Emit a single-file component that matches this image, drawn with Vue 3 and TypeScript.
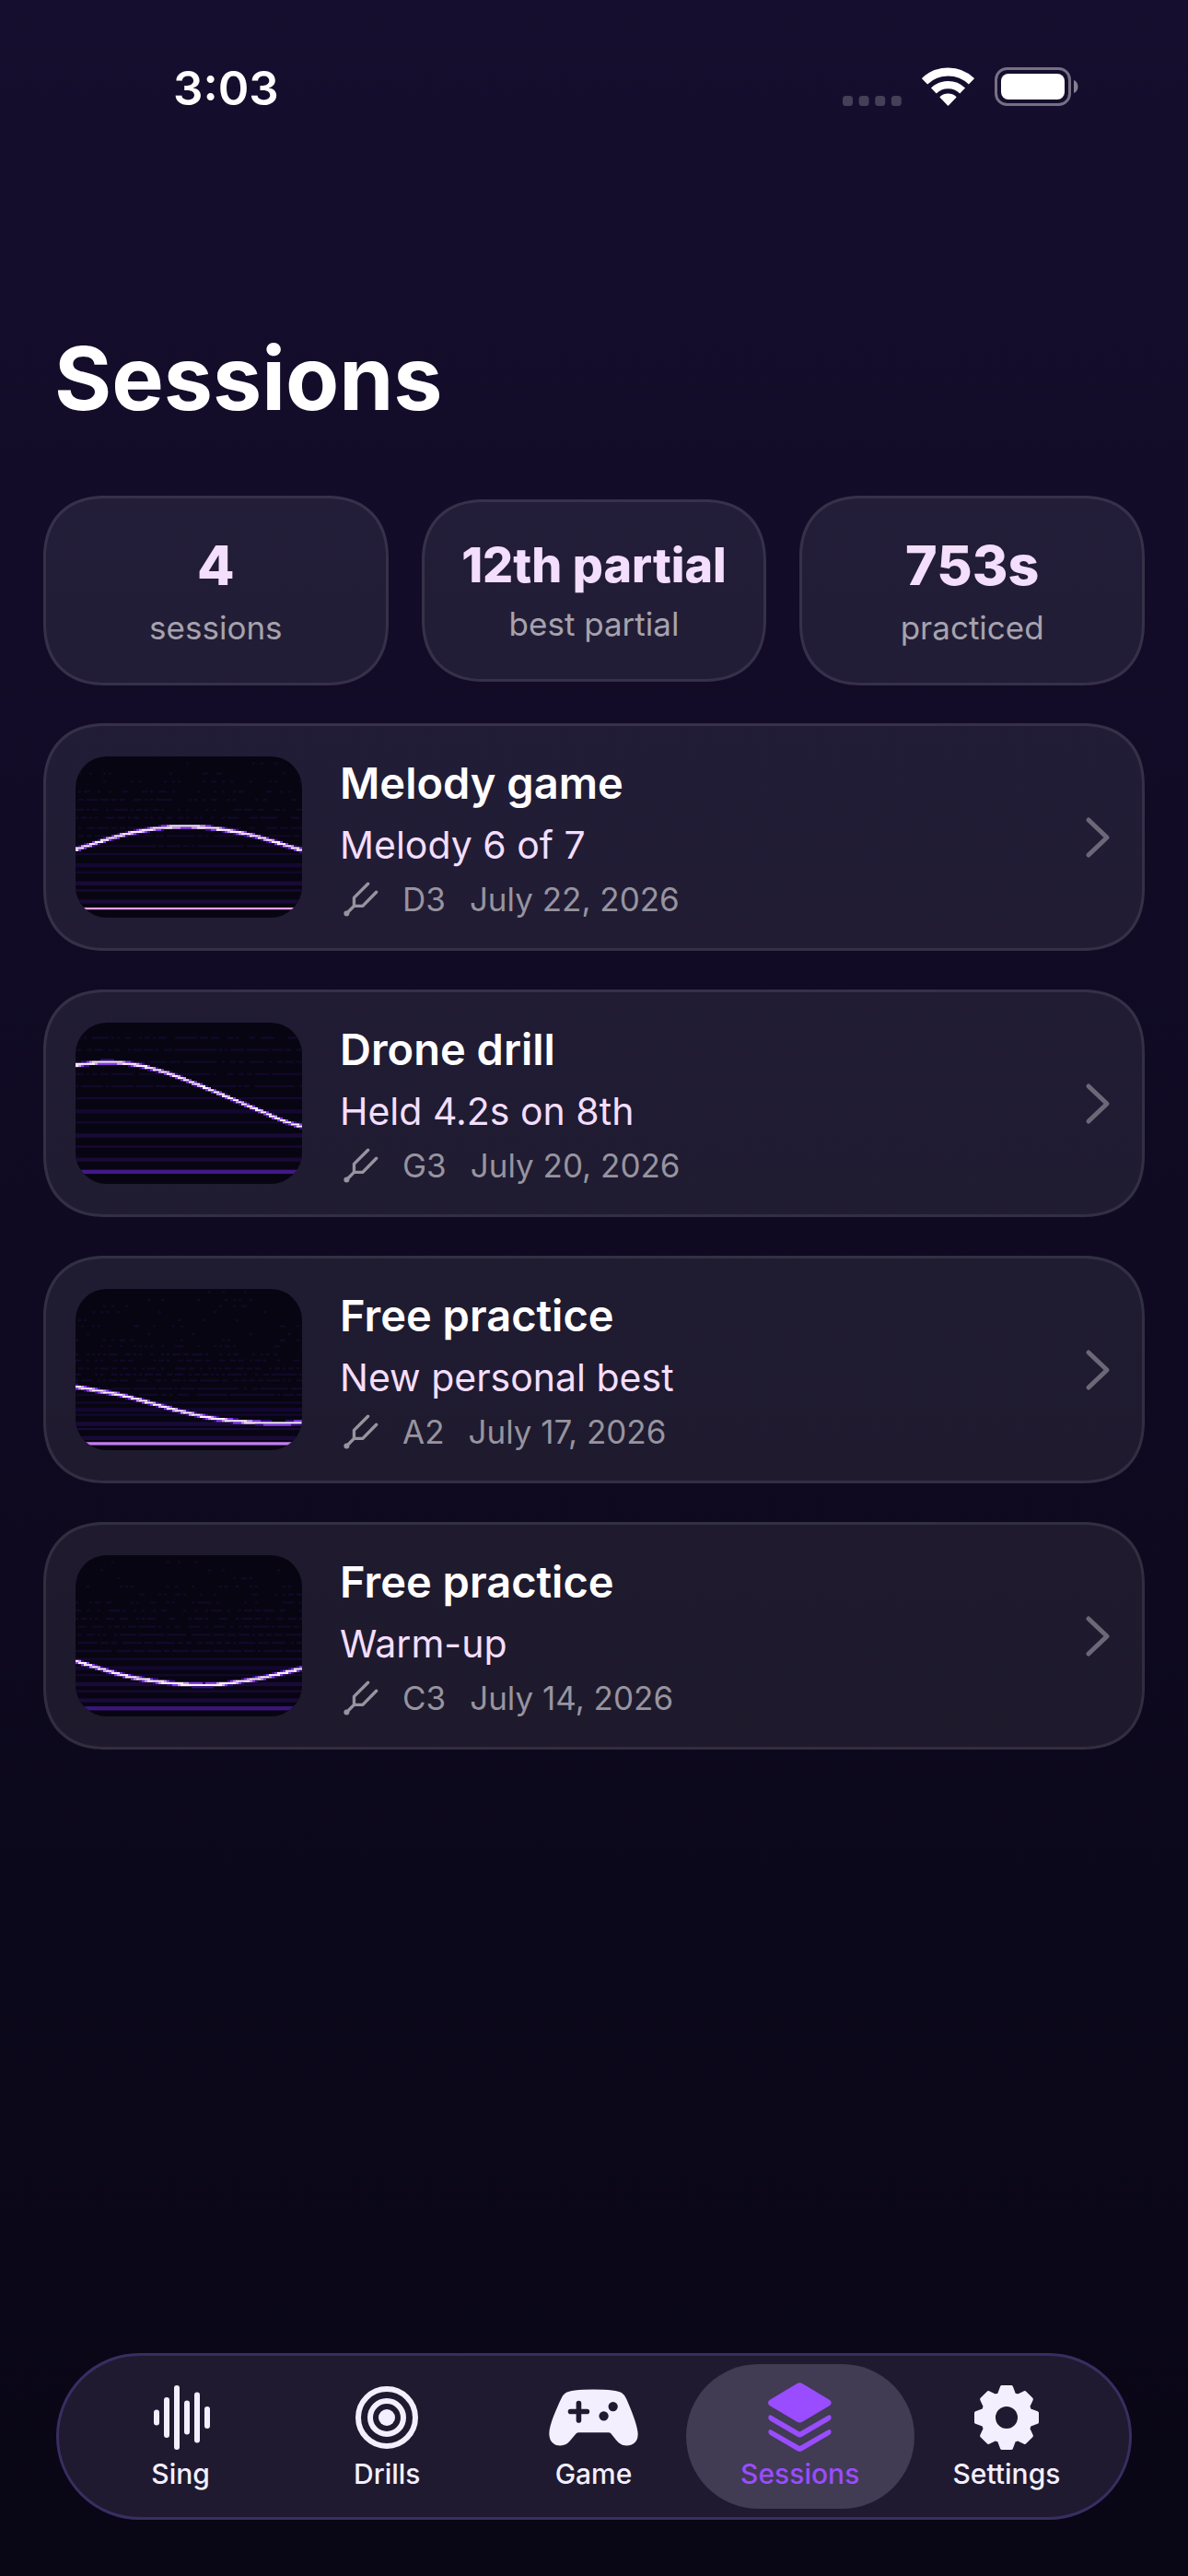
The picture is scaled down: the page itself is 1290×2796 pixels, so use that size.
<script setup lang="ts">
interface Stat {
  value: string
  label: string
  compact?: boolean
}

interface Partial {
  rows: number
  color: string
}

interface Session {
  title: string
  note: string
  pitch: string
  date: string
  seed: number
  spacing: number
  base: number
  fundamental: Partial
  contour: [number, number][]
}

interface Cell {
  x: number
  y: number
  w: number
  h: number
  fill: string
}

const COLS = 82
const ROWS = 80

const stats: Stat[] = [
  { value: '4', label: 'sessions' },
  { value: '12th partial', label: 'best partial', compact: true },
  { value: '753s', label: 'practiced' },
]

const sessions: Session[] = [
  {
    title: 'Melody game',
    note: 'Melody 6 of 7',
    pitch: 'D3',
    date: 'July 22, 2026',
    seed: 11,
    spacing: 4.5,
    base: 75,
    fundamental: { rows: 1, color: '#eaa6f4' },
    contour: [[0, 101], [61, 83], [121, 76], [184, 84], [246, 102]],
  },
  {
    title: 'Drone drill',
    note: 'Held 4.2s on 8th',
    pitch: 'G3',
    date: 'July 20, 2026',
    seed: 29,
    spacing: 6,
    base: 73,
    fundamental: { rows: 2, color: '#431889' },
    contour: [[0, 46], [31, 43], [61, 45], [94, 53], [127, 65], [161, 79], [194, 93], [227, 107], [246, 113]],
  },
  {
    title: 'Free practice',
    note: 'New personal best',
    pitch: 'A2',
    date: 'July 17, 2026',
    seed: 47,
    spacing: 3.4,
    base: 76,
    fundamental: { rows: 1.5, color: '#c67cf4' },
    contour: [[0, 106], [52, 116], [119, 134], [160, 142], [215, 146], [246, 145]],
  },
  {
    title: 'Free practice',
    note: 'Warm-up',
    pitch: 'C3',
    date: 'July 14, 2026',
    seed: 83,
    spacing: 4,
    base: 75,
    fundamental: { rows: 2, color: '#3a167a' },
    contour: [[0, 115], [64, 133], [137, 141], [192, 135], [246, 123]],
  },
]

const tabs = ['Sing', 'Drills', 'Game', 'Sessions', 'Settings']
const activeTab = 'Sessions'

const voiceBars = [
  { x: 5, h: 17 },
  { x: 16, h: 44 },
  { x: 27, h: 70 },
  { x: 38, h: 37 },
  { x: 49, h: 55 },
  { x: 60, h: 24 },
]

function randomFrom(seed: number): () => number {
  let state = seed
  return () => {
    state = (state * 1664525 + 1013904223) % 4294967296
    return state / 4294967296
  }
}

function contourAt(points: [number, number][], x: number): number {
  let i = 0
  while (i < points.length - 2 && x > points[i + 1][0]) i++
  const p0 = points[Math.max(i - 1, 0)]
  const p1 = points[i]
  const p2 = points[i + 1]
  const p3 = points[Math.min(i + 2, points.length - 1)]
  const span = p2[0] - p1[0]
  const t = (x - p1[0]) / span
  const m1 = ((p2[1] - p0[1]) / (p2[0] - p0[0])) * span
  const m2 = ((p3[1] - p1[1]) / (p3[0] - p1[0])) * span
  const t2 = t * t
  const t3 = t2 * t
  return (2 * t3 - 3 * t2 + 1) * p1[1] + (t3 - 2 * t2 + t) * m1 + (-2 * t3 + 3 * t2) * p2[1] + (t3 - t2) * m2
}

function heat(level: number): string {
  if (level > 0.66) return '#fdf0ff'
  if (level > 0.56) return '#d79bff'
  if (level > 0.4) return '#8a3df0'
  return '#37108a'
}

// Builds the spectrogram as coloured cells: faint harmonics, the held note, then the sung line.
function spectrogram(s: Session): Cell[] {
  const cells: Cell[] = []
  const random = randomFrom(s.seed)
  for (let n = 1; s.base - n * s.spacing > 1; n++) {
    const y = Math.round(s.base - n * s.spacing)
    if (n <= 6) {
      const fill = n < 4 ? '#190a38' : '#130830'
      cells.push({ x: 0, y, w: COLS, h: n % 2 ? 2 : 1, fill })
      continue
    }
    const density = Math.max(0.08, 1 - (n - 5) * (s.spacing > 5 ? 0.07 : 0.085))
    for (let x = 0; x < COLS; x++) {
      if (random() < density) cells.push({ x, y, w: 1, h: 1, fill: '#110929' })
    }
  }
  cells.push({ x: 0, y: s.base, w: COLS, h: s.fundamental.rows, fill: s.fundamental.color })
  for (let x = 0; x < COLS; x++) {
    const y = (contourAt(s.contour, (x + 0.5) * 3) * ROWS) / 175
    for (let row = Math.floor(y) - 1; row <= Math.floor(y) + 1; row++) {
      const level = 1 - Math.abs(row + 0.5 - y) / 1.6
      if (level > 0.25) cells.push({ x, y: row, w: 1, h: 1, fill: heat(level) })
    }
  }
  return cells
}

const rows = sessions.map((s) => ({ ...s, cells: spectrogram(s) }))

function gearPath(): string {
  const parts: string[] = []
  for (let i = 0; i < 8; i++) {
    const a = (i * Math.PI) / 4
    const points = [[-8, -25], [-5, -33], [5, -33], [8, -25]]
    for (const [x, y] of points) {
      const px = 38 + x * Math.cos(a) - y * Math.sin(a)
      const py = 38 + x * Math.sin(a) + y * Math.cos(a)
      parts.push(`${px.toFixed(1)} ${py.toFixed(1)}`)
    }
  }
  return `M${parts.join('L')}Z`
}

const gear = `${gearPath()}M38 24a14 14 0 1 0 0 28a14 14 0 1 0 0-28Z`
</script>

<template>
  <div class="screen">
    <header class="status">
      <time class="clock">3:03</time>
      <div class="indicators">
        <svg class="dots" viewBox="0 0 64 11" aria-hidden="true">
          <rect v-for="n in 4" :key="n" :x="(n - 1) * 17.6" width="11" height="11" rx="3.5" />
        </svg>
        <svg class="wifi" viewBox="423 67 172 127" aria-hidden="true">
          <path d="M431.9 113.2A111 111 0 0 1 586.1 113.2" stroke-width="27" />
          <path d="M461.7 144.1A68 68 0 0 1 556.3 144.1" stroke-width="25" />
          <path class="wedge" d="M509 190L485 165A36 36 0 0 1 533 165Z" />
        </svg>
        <svg class="battery" viewBox="0 0 91 42" aria-hidden="true">
          <rect class="shell" x="1.5" y="1.5" width="80" height="39" rx="12" />
          <rect class="charge" x="7" y="7" width="69" height="28" rx="8" />
          <path class="nub" d="M86 14C92 16 92 26 86 28Z" />
        </svg>
      </div>
    </header>

    <main class="content">
      <h1>Sessions</h1>

      <section class="stats">
        <div v-for="stat in stats" :key="stat.label" class="panel stat" :class="{ compact: stat.compact }">
          <strong>{{ stat.value }}</strong>
          <span>{{ stat.label }}</span>
        </div>
      </section>

      <ul class="list">
        <li v-for="row in rows" :key="row.date">
          <a class="panel session" href="#">
            <svg class="thumb" :viewBox="`0 0 ${COLS} ${ROWS}`" preserveAspectRatio="none" aria-hidden="true">
              <rect
                v-for="(cell, i) in row.cells"
                :key="i"
                :x="cell.x"
                :y="cell.y"
                :width="cell.w"
                :height="cell.h"
                :fill="cell.fill"
              />
            </svg>
            <div class="details">
              <h2>{{ row.title }}</h2>
              <p class="note">{{ row.note }}</p>
              <p class="meta">
                <svg class="fork" viewBox="888 532 116 112" aria-hidden="true">
                  <path d="M970 538L925 583V610H953L997 565M925 610L901 634" />
                  <circle cx="901" cy="634" r="9" />
                </svg>
                <span>{{ row.pitch }}</span>
                <time>{{ row.date }}</time>
              </p>
            </div>
            <svg class="chevron" viewBox="0 0 28 46" aria-hidden="true">
              <path d="M4 4L24 23L4 42" />
            </svg>
          </a>
        </li>
      </ul>
    </main>

    <nav class="tabbar">
      <button
        v-for="tab in tabs"
        :key="tab"
        type="button"
        class="tab"
        :class="{ active: tab === activeTab }"
        :aria-current="tab === activeTab ? 'page' : undefined"
      >
        <span class="glyph">
          <svg v-if="tab === 'Sing'" width="62" height="72" viewBox="0 0 62 72" aria-hidden="true">
            <rect v-for="bar in voiceBars" :key="bar.x" :x="bar.x - 3" :y="36 - bar.h / 2" width="6" :height="bar.h" rx="3" />
          </svg>
          <svg v-else-if="tab === 'Drills'" width="68" height="68" viewBox="0 0 68 68" aria-hidden="true">
            <circle class="ring" cx="34" cy="34" r="31" />
            <circle class="ring" cx="34" cy="34" r="18" />
            <circle cx="34" cy="34" r="9" />
          </svg>
          <svg v-else-if="tab === 'Game'" width="97" height="62" viewBox="50 127 293 186" aria-hidden="true">
            <path
              d="M104 140Q122 128 196 128Q272 128 290 140Q298 145 305 160Q342 245 342 275C342 300 325 312 305 312C288 312 277 303 266 288L254 273Q251 269 245 269H148Q143 269 139 273L118 298Q106 312 88 312C65 312 51 298 51 272C51 245 75 190 92 155Q97 145 104 140Z"
            />
            <path class="cross" d="M121 200.500H175M148 173V229" />
            <circle class="hole" cx="260.500" cy="184" r="15.500" />
            <circle class="hole" cx="230" cy="215" r="15.500" />
          </svg>
          <svg v-else-if="tab === 'Sessions'" width="69" height="76" viewBox="763 106 208 229" aria-hidden="true">
            <path
              d="M768 163L857 110Q866.500 104 876 110L965 163Q975 172 965 181L876 234Q866.500 240 857 234L768 181Q758 172 768 163Z"
            />
            <path
              d="M764 221Q764 209 774 214L866.500 267L959 214Q970 209 970 221Q970 227 963 231L874 283Q866.500 287 859 283L770 231Q764 227 764 221Z"
            />
            <path
              d="M764 268Q764 256 774 261L866.500 314L959 261Q970 256 970 268Q970 274 963 278L874 330Q866.500 334 859 330L770 278Q764 274 764 268Z"
            />
          </svg>
          <svg v-else class="gear" width="76" height="76" viewBox="0 0 76 76" aria-hidden="true">
            <path :d="gear" fill-rule="evenodd" />
          </svg>
        </span>
        <span class="name">{{ tab }}</span>
      </button>
    </nav>
  </div>
</template>

<style>
body {
  margin: 0;
  background: #090615;
}
</style>

<style scoped>
.screen {
  box-sizing: border-box;
  min-height: 100vh;
  display: flex;
  flex-direction: column;
  background: linear-gradient(#150e2e, #090615);
  color: #fff;
  font-family: Inter, "Liberation Sans", sans-serif;
}

.status {
  display: flex;
  align-items: flex-start;
  justify-content: space-between;
  height: 60px;
  padding: 64px 119px 0 188px;
}

.clock {
  font-size: 51px;
  font-weight: 600;
  line-height: 64px;
}

.indicators {
  display: flex;
  align-items: center;
  gap: 22px;
  height: 60px;
}

.dots {
  width: 64px;
  height: 11px;
  margin-top: 30px;
  fill: #463f58;
}

.wifi {
  width: 57px;
  height: 42px;
  fill: none;
  stroke: #fff;
}

.wifi .wedge {
  fill: #fff;
  stroke-width: 6;
  stroke-linejoin: round;
}

.battery {
  width: 91px;
  height: 42px;
}

.shell {
  fill: none;
  stroke: #767083;
  stroke-width: 3;
}

.charge {
  fill: #fff;
}

.nub {
  fill: #857f91;
}

.content {
  padding: 227px 47px 0;
}

h1 {
  margin: 0 0 67px;
  padding: 0 12px;
  font-size: 95px;
  font-weight: 700;
  line-height: 120px;
}

.panel {
  box-sizing: border-box;
  border: 3px solid rgba(255, 255, 255, 0.09);
  background: rgba(255, 255, 255, 0.07);
  border-radius: 57px;
}

.stats {
  display: grid;
  grid-template-columns: repeat(3, 1fr);
  align-items: center;
  gap: 36px;
}

.stat {
  display: flex;
  flex-direction: column;
  align-items: center;
  gap: 10px;
  padding: 38px 0;
  white-space: nowrap;
}

.stat strong {
  color: #f3defd;
  font-size: 59px;
  font-weight: 800;
  line-height: 70px;
}

.stat.compact strong {
  font-size: 52px;
  line-height: 62px;
}

.stat span {
  color: #a6a3ad;
  font-size: 35px;
  line-height: 44px;
}

.list {
  display: flex;
  flex-direction: column;
  gap: 42px;
  margin: 41px 0 0;
  padding: 0;
  list-style: none;
}

.session {
  display: flex;
  align-items: center;
  padding: 33px 34px 33px 32px;
  color: inherit;
  text-decoration: none;
}

.thumb {
  flex: none;
  width: 246px;
  height: 175px;
  border-radius: 34px;
  background: #080512;
}

.details {
  display: flex;
  flex: 1;
  flex-direction: column;
  gap: 11px;
  margin-left: 41px;
}

h2,
p {
  margin: 0;
}

h2 {
  font-size: 47px;
  font-weight: 600;
  line-height: 58px;
}

.note {
  color: #f3defd;
  font-size: 41px;
  line-height: 55px;
}

.meta {
  display: flex;
  align-items: center;
  gap: 26px;
  color: #97949f;
  font-size: 35px;
  line-height: 40px;
}

.fork {
  width: 39px;
  height: 38px;
  margin-left: 3px;
  fill: currentColor;
}

.fork path {
  fill: none;
  stroke: currentColor;
  stroke-width: 10;
  stroke-linecap: round;
  stroke-linejoin: round;
}

.chevron {
  width: 28px;
  height: 46px;
  fill: none;
  stroke: #6c6878;
  stroke-width: 5;
  stroke-linecap: round;
  stroke-linejoin: round;
}

.tabbar {
  display: flex;
  box-sizing: border-box;
  margin: auto 61px 61px;
  padding: 0 21px 0 20px;
  border: 3px solid #382e60;
  border-radius: 91px;
  background: #1f1a2f;
}

.tab {
  position: relative;
  display: flex;
  flex: 1 1 0;
  flex-direction: column;
  align-items: center;
  gap: 5px;
  padding: 29px 0;
  border: 0;
  background: none;
  color: #f4efff;
  font: inherit;
}

.tab.active {
  color: #9a4cff;
}

.tab.active::before {
  content: "";
  position: absolute;
  inset: 9px -12px;
  border-radius: 79px;
  background: #413b53;
}

.glyph {
  position: relative;
  display: flex;
  align-items: center;
  justify-content: center;
  height: 76px;
}

.glyph svg {
  overflow: visible;
  fill: currentColor;
}

.name {
  position: relative;
  font-size: 30px;
  font-weight: 500;
  line-height: 36px;
}

.glyph .ring {
  fill: none;
  stroke: currentColor;
  stroke-width: 6;
}

.glyph .cross {
  fill: none;
  stroke: #1f1a2f;
  stroke-width: 17;
  stroke-linecap: round;
}

.glyph .hole {
  fill: #1f1a2f;
}

.gear path {
  stroke: currentColor;
  stroke-width: 4;
  stroke-linejoin: round;
}

@supports (corner-shape: superellipse(1.2)) {
  .panel {
    border-radius: 68px;
    corner-shape: superellipse(1.2);
  }
}
</style>
